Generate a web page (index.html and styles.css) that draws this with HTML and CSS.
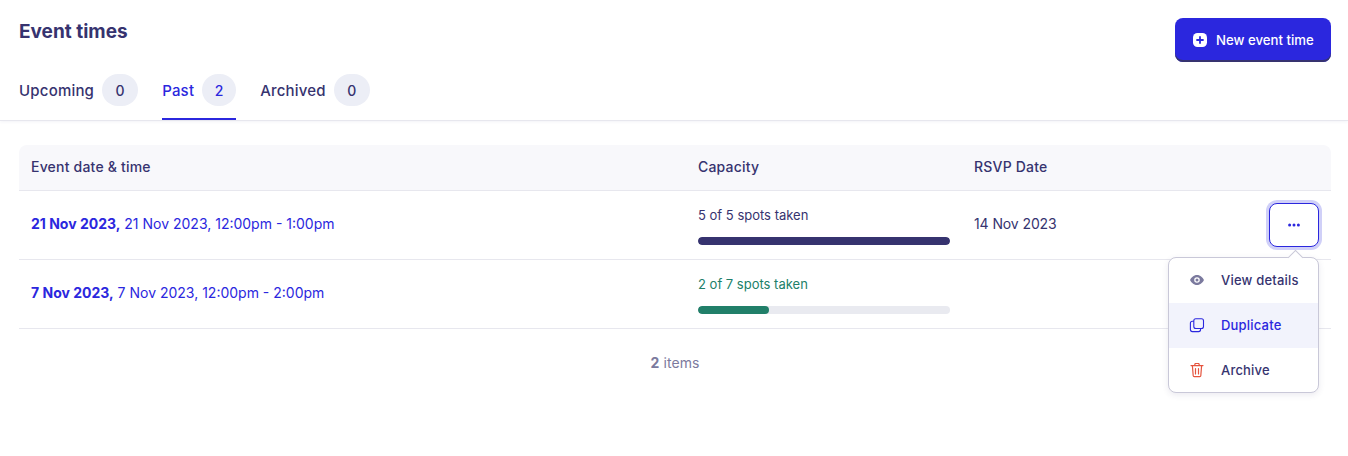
FILE: index.html
```html
<!DOCTYPE html>
<html lang="en">
<head>
<meta charset="utf-8">
<title>Event times</title>
<link rel="stylesheet" href="styles.css">
</head>
<body>
<header class="top">
  <div class="top-row">
    <h1 class="title">Event times</h1>
    <button class="primary" type="button">
      <svg class="plus" width="14" height="14" viewBox="0 0 14 14"><rect width="14" height="14" rx="4.500" fill="#fff"/><path d="M7 4v6M4 7h6" stroke="#2b27de" stroke-width="1.800" stroke-linecap="round"/></svg>
      New event time
    </button>
  </div>
  <nav class="tabs">
    <a class="tab"><span>Upcoming</span><span class="count">0</span></a>
    <a class="tab active"><span>Past</span><span class="count">2</span></a>
    <a class="tab"><span>Archived</span><span class="count">0</span></a>
  </nav>
</header>
<main class="content">
  <div class="table">
    <div class="row head">
      <div>Event date &amp; time</div>
      <div>Capacity</div>
      <div>RSVP Date</div>
      <div></div>
    </div>
    <div class="row">
      <div class="event"><b>21 Nov 2023,</b> 21 Nov 2023, 12:00pm - 1:00pm</div>
      <div class="cap">
        <div class="cap-label">5 of 5 spots taken</div>
        <div class="bar"><div class="fill full" style="width:100%"></div></div>
      </div>
      <div class="rsvp">14 Nov 2023</div>
      <div class="actions">
        <button class="more" type="button" aria-label="More">
          <svg width="12" height="4" viewBox="0 0 12 4" fill="#2b27de"><circle cx="1.600" cy="2" r="1.500"/><circle cx="6" cy="2" r="1.500"/><circle cx="10.400" cy="2" r="1.500"/></svg>
        </button>
        <div class="menu">
          <span class="arrow"></span>
          <a class="item">
            <svg width="16" height="16" viewBox="0 0 16 16"><path fill-rule="evenodd" fill="#7b7a9e" d="M8 3C4.600 3 2 5.800 1 8c1 2.200 3.600 5 7 5s6-2.800 7-5c-1-2.200-3.600-5-7-5zm0 7.800A2.800 2.800 0 1 1 8 5.200a2.800 2.800 0 0 1 0 5.600z"/><circle cx="8" cy="8" r="1.500" fill="#7b7a9e"/></svg>
            View details
          </a>
          <a class="item hover">
            <svg width="16" height="16" viewBox="0 0 16 16" fill="none" stroke="#2b27de" stroke-width="1.100" stroke-linejoin="round"><rect x="4.800" y="1.800" width="9.700" height="9.700" rx="2"/><path d="M4.800 4.200H3.400a2 2 0 0 0-2 2v6.400a2 2 0 0 0 2 2h6.200a2 2 0 0 0 2-2v-1.100"/></svg>
            Duplicate
          </a>
          <a class="item">
            <svg width="16" height="16" viewBox="0 0 16 16" fill="none" stroke="#e5533d" stroke-width="1.200" stroke-linecap="round" stroke-linejoin="round"><path d="M2 3.600h12M5.600 3.400l.6-1.900h3.600l.6 1.900M3.400 3.800l.8 10a1 1 0 0 0 1 .9h5.600a1 1 0 0 0 1-.9l.8-10M6.500 6.500v5.500M9.500 6.500v5.500"/></svg>
            Archive
          </a>
        </div>
      </div>
    </div>
    <div class="row">
      <div class="event"><b>7 Nov 2023,</b> 7 Nov 2023, 12:00pm - 2:00pm</div>
      <div class="cap open">
        <div class="cap-label">2 of 7 spots taken</div>
        <div class="bar"><div class="fill" style="width:28.100%"></div></div>
      </div>
      <div class="rsvp"></div>
      <div class="actions"></div>
    </div>
  </div>
  <p class="total"><b>2</b> items</p>
</main>
</body>
</html>
```
FILE: styles.css
```css
* { box-sizing: border-box; }
html, body { margin: 0; padding: 0; }
body {
  height: 456px;
  overflow: hidden;
  background: #fff;
  color: #36336f;
  font-family: "Inter", "Liberation Sans", sans-serif;
  font-size: 14px;
}
.top {
  height: 121px;
  padding: 18px 17px 0 19px;
  border-bottom: 1px solid #e7e7ee;
  box-shadow: 0 1px 3px rgba(54, 51, 111, .06);
}
.top-row { display: flex; justify-content: space-between; align-items: flex-start; }
.title {
  margin: 3px 0 0;
  font-size: 19px;
  line-height: 22px;
  font-weight: 700;
  letter-spacing: 0;
  color: #36336f;
}
.primary {
  display: flex;
  align-items: center;
  gap: 9px;
  width: 156px;
  height: 44px;
  padding: 0 0 1px 18px;
  border: 0;
  border-radius: 8px;
  background: #2b27de;
  box-shadow: inset 0 -2px 0 #36336f;
  color: #fff;
  font: 500 13.200px "Inter", sans-serif;
}
.plus { flex: none; }
.tabs { display: flex; gap: 24px; margin-top: 12px; }
.tab {
  display: flex;
  align-items: center;
  gap: 8px;
  height: 46px;
  padding-bottom: 12px;
  font-size: 15px;
  font-weight: 500;
  letter-spacing: .2px;
  color: #36336f;
  border-bottom: 2px solid transparent;
}
.tab.active { color: #2b27de; border-bottom-color: #2b27de; }
.count {
  display: flex;
  align-items: center;
  justify-content: center;
  min-width: 36px;
  height: 32px;
  padding: 0 12px;
  border-radius: 16px;
  background: #eceef6;
  font-size: 14px;
}
.tab.active .count { min-width: 34px; }
.content { padding: 24px 17px 0 19px; }
.row {
  display: grid;
  grid-template-columns: 667px 276px 1fr 62px;
  align-items: center;
  height: 69px;
  padding-left: 12px;
  border-bottom: 1px solid #e7e7ee;
}
.head {
  height: 46px;
  padding-bottom: 2px;
  background: #f8f8fb;
  border-radius: 8px 8px 0 0;
  font-weight: 500;
  line-height: 18px;
  letter-spacing: .2px;
}
.event { padding-bottom: 3px; color: #2b27de; font-size: 14px; }
.event b { font-weight: 700; }
.cap { width: 252px; padding-top: 2px; }
.cap-label { margin-bottom: 14px; font-size: 13px; line-height: 16px; }
.bar { height: 8px; border-radius: 4px; background: #e9eaf0; overflow: hidden; }
.fill { height: 100%; border-radius: 4px; background: #217f69; }
.fill.full { background: #36336f; }
.open .cap-label { color: #217f69; }
.rsvp { padding-bottom: 3px; font-size: 14px; letter-spacing: -.1px; }
.actions { position: relative; display: flex; justify-content: flex-end; padding-right: 12px; }
.more {
  display: flex;
  align-items: center;
  justify-content: center;
  width: 50px;
  height: 44px;
  padding: 0;
  border: 1.500px solid #2b27de;
  border-radius: 8px;
  background: #fff;
  box-shadow: 0 0 0 3px #d0d0f8;
}
.menu {
  position: absolute;
  z-index: 2;
  top: 54px;
  right: 12px;
  width: 151px;
  height: 136px;
  background: #fff;
  border: 1px solid #c9c8d8;
  border-radius: 8px;
  box-shadow: 0 2px 6px rgba(54, 51, 111, .1);
}
.arrow {
  position: absolute;
  top: -6px;
  right: 17px;
  width: 11px;
  height: 11px;
  background: #fff;
  border-top: 1px solid #c9c8d8;
  border-left: 1px solid #c9c8d8;
  transform: rotate(45deg);
}
.item {
  position: relative;
  display: flex;
  align-items: center;
  gap: 16px;
  height: 45px;
  padding: 0 0 2px 20px;
  font-size: 13px;
  font-weight: 500;
  letter-spacing: .2px;
}
.item svg { flex: none; }
.item.hover { background: #f2f3fc; color: #2b27de; }
.total { margin: 25px 0 0; text-align: center; color: #7b7a9e; font-size: 14px; line-height: 18px; letter-spacing: .1px; }
.total b { font-weight: 700; }
```
